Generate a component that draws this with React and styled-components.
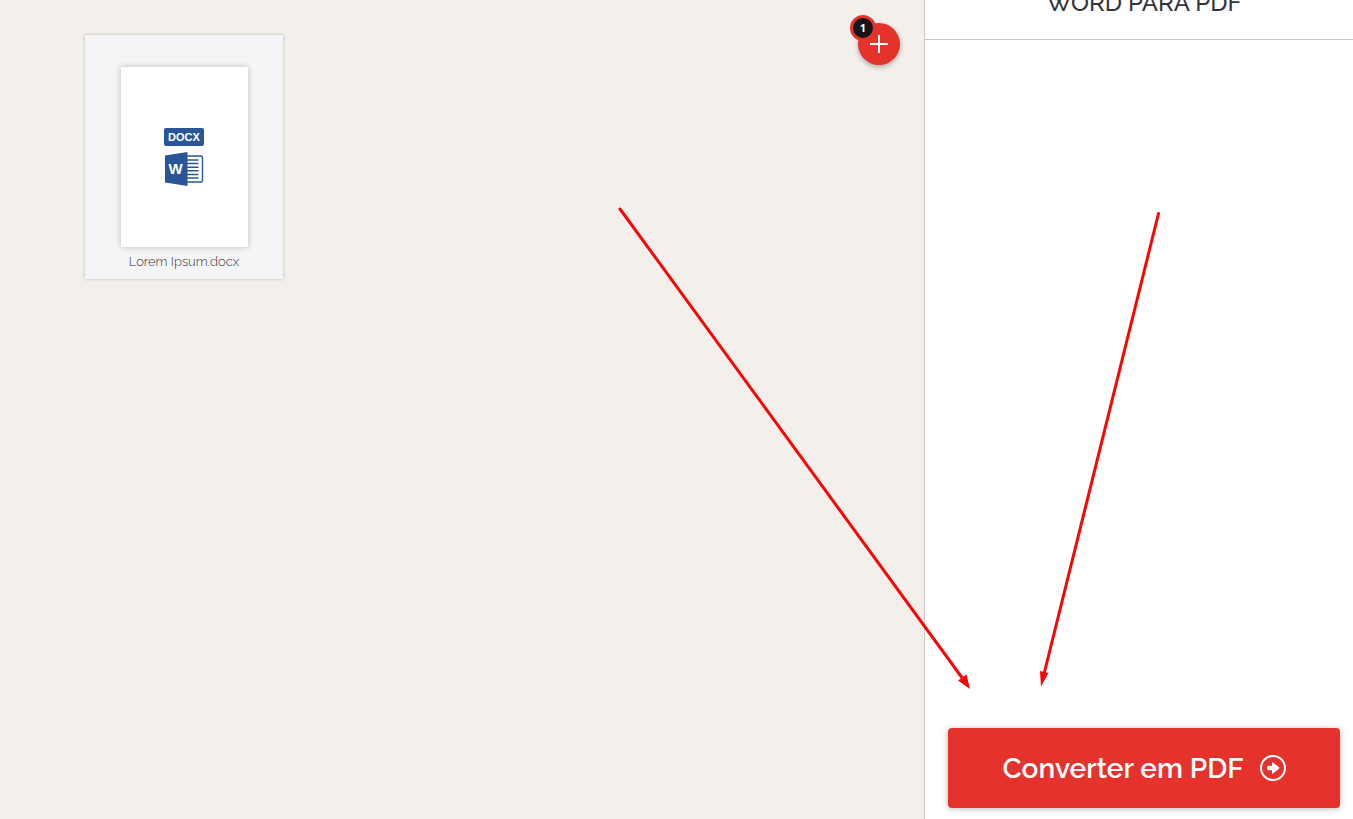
import React from "react";
import styled, { createGlobalStyle } from "styled-components";

const GlobalStyle = createGlobalStyle`
  * {
    box-sizing: border-box;
  }

  body {
    margin: 0;
    background: #fff;
    color: #33333b;
    font-family: Raleway, Lato, "Open Sans", sans-serif;
  }
`;

const Page = styled.div`
  position: relative;
  display: flex;
  min-height: 100vh;
`;

const Workarea = styled.main`
  flex: 1;
  display: flex;
  justify-content: space-between;
  align-items: flex-start;
  padding: 23px 24px 24px 85px;
  background: #f3f0ec;
`;

const FileList = styled.ul`
  display: flex;
  flex-wrap: wrap;
  gap: 24px;
  margin: 12px 0 0;
  padding: 0;
  list-style: none;
`;

const FileCard = styled.li`
  display: flex;
  flex-direction: column;
  align-items: center;
  width: 198px;
  padding: 32px 8px 7px;
  background: #f5f5f8;
  box-shadow: 0 0 3px rgba(0, 0, 0, 0.24);
`;

const Preview = styled.div`
  display: flex;
  flex-direction: column;
  align-items: center;
  justify-content: center;
  gap: 6px;
  width: 127px;
  height: 180px;
  background: #fff;
  box-shadow: 0 0 6px rgba(0, 0, 0, 0.24);
`;

const Extension = styled.span`
  width: 40px;
  border-radius: 2px;
  background: #2a5699;
  color: #fff;
  font: bold 11px/18px "Liberation Sans", Arial, sans-serif;
  text-align: center;
`;

const FileName = styled.span`
  margin-top: 5px;
  font-size: 13px;
  font-weight: 300;
  line-height: 20px;
`;

const AddWrapper = styled.div`
  position: relative;
`;

const AddButton = styled.button`
  display: flex;
  align-items: center;
  justify-content: center;
  width: 42px;
  height: 42px;
  padding: 0;
  border: 0;
  border-radius: 50%;
  background: #e5322d;
  color: #fff;
  box-shadow: 0 2px 5px rgba(0, 0, 0, 0.3);
  cursor: pointer;
`;

const Counter = styled.span`
  position: absolute;
  top: -8px;
  left: -8px;
  width: 26px;
  height: 26px;
  border: 3px solid #e5322d;
  border-radius: 50%;
  background: #161616;
  color: #fff;
  font: bold 11px/20px "Open Sans", sans-serif;
  text-align: center;
`;

const Sidebar = styled.aside`
  display: flex;
  flex-direction: column;
  justify-content: space-between;
  width: 429px;
  border-left: 1px solid #c8c8c8;
  background: #fff;
`;

const SidebarHeader = styled.header`
  display: flex;
  align-items: flex-end;
  justify-content: center;
  height: 40px;
  padding: 0 13px 20px 23px;
  overflow: hidden;
  border-bottom: 1px solid #c8c8c8;
`;

const Title = styled.h1`
  margin: 0;
  font-size: 24px;
  font-weight: 500;
  line-height: 32px;
`;

const SidebarFooter = styled.footer`
  padding: 11px 13px 11px 23px;
`;

const ConvertButton = styled.button`
  display: flex;
  align-items: center;
  justify-content: center;
  gap: 16px;
  width: 100%;
  height: 80px;
  padding: 0;
  border: 0;
  border-radius: 4px;
  background: #e5322d;
  color: #fff;
  font-family: inherit;
  font-size: 28px;
  font-weight: 600;
  box-shadow: 0 1px 6px rgba(0, 0, 0, 0.28);
  cursor: pointer;
`;

const Annotations = styled.svg`
  position: absolute;
  top: 0;
  left: 0;
  width: 100%;
  height: 100%;
  pointer-events: none;
`;

const WordIcon = () => (
  <svg width="40" height="34" viewBox="0 0 40 34" aria-hidden="true">
    <path d="M22 4h15q1.500 0 1.500 1.500v23q0 1.500-1.500 1.500H22" fill="#fff" stroke="#2a5699" strokeWidth="1.400" />
    <path
      d="M22 8h12.500M22 11.600h12.500M22 15.200h12.500M22 18.800h12.500M22 22.400h12.500M22 26h12.500"
      stroke="#2a5699"
      strokeWidth="1.500"
    />
    <path d="M1 3.500L23.500 0v34L1 30.500z" fill="#2a5699" />
    <text
      x="11.500"
      y="22"
      fill="#fff"
      textAnchor="middle"
      fontFamily="Liberation Sans, Arial, sans-serif"
      fontSize="15"
      fontWeight="700"
    >
      W
    </text>
  </svg>
);

const PlusIcon = () => (
  <svg width="18" height="18" viewBox="0 0 18 18" aria-hidden="true">
    <path d="M9 0v18M0 9h18" stroke="currentColor" strokeWidth="2" />
  </svg>
);

const ArrowCircleIcon = () => (
  <svg width="26" height="26" viewBox="0 0 26 26" aria-hidden="true">
    <circle cx="13" cy="13" r="12" fill="none" stroke="currentColor" strokeWidth="2" />
    <path
      d="M8 10.800h4V8q0-1.200 1-.5l6 4.800q.8.700 0 1.400l-6 4.800q-1 .7-1-.5v-2.800H8q-.8 0-.8-.8v-2.800q0-.8.800-.8z"
      fill="currentColor"
    />
  </svg>
);

const App = () => (
  <>
    <GlobalStyle />
    <Page>
      <Workarea>
        <FileList>
          <FileCard>
            <Preview>
              <Extension>DOCX</Extension>
              <WordIcon />
            </Preview>
            <FileName>Lorem Ipsum.docx</FileName>
          </FileCard>
        </FileList>
        <AddWrapper>
          <AddButton type="button" aria-label="Adicionar arquivos">
            <PlusIcon />
          </AddButton>
          <Counter>1</Counter>
        </AddWrapper>
      </Workarea>
      <Sidebar>
        <SidebarHeader>
          <Title>WORD PARA PDF</Title>
        </SidebarHeader>
        <SidebarFooter>
          <ConvertButton type="button">
            Converter em PDF
            <ArrowCircleIcon />
          </ConvertButton>
        </SidebarFooter>
      </Sidebar>
      <Annotations aria-hidden="true">
        <g stroke="#f80505" strokeWidth="3" strokeLinecap="round">
          <path d="M620 209L963 679" />
          <path d="M1158.500 213.500L1044 674" />
        </g>
        <g fill="#f80505">
          <path d="M970 689L958 680.500L966.500 674.500z" />
          <path d="M1041 686.500L1040 671L1048.500 673z" />
        </g>
      </Annotations>
    </Page>
  </>
);

export default App;
